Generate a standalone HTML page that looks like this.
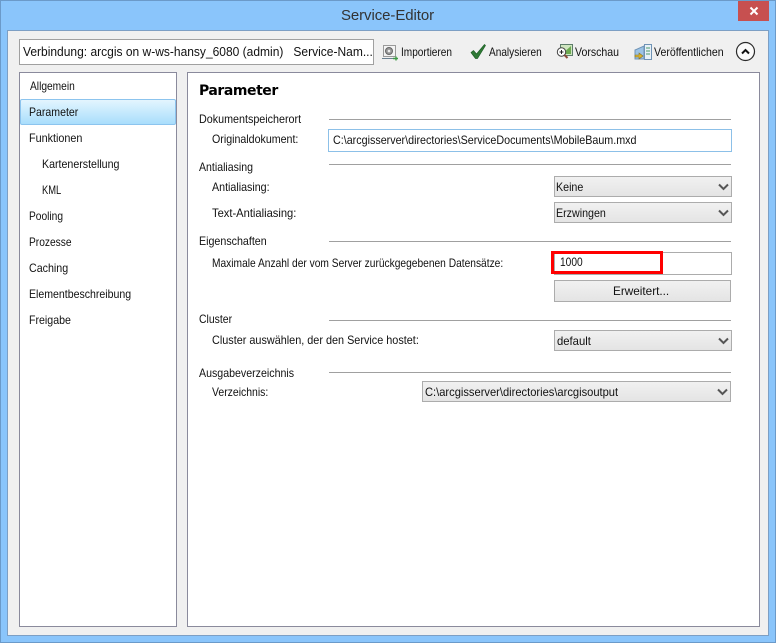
<!DOCTYPE html>
<html><head><meta charset="utf-8"><style>
html,body{margin:0;padding:0}
body{width:776px;height:643px;overflow:hidden;position:relative;background:#8ac5fb;font-family:"Liberation Sans",sans-serif;font-size:12px;color:#000}
div{position:absolute;box-sizing:border-box}
.t{white-space:nowrap;line-height:14px;height:14px;font-size:12px;color:#111;transform:scaleX(.89);transform-origin:0 0}
.line{height:1px;background:#a0a0a0;left:329px;width:402px}
.sel{height:21px;background:linear-gradient(#f1f1f1,#e4e4e4);border:1px solid #acacac}
.sel svg{position:absolute;right:2px;top:6px}
</style></head><body>
<div style="left:0;top:0;width:776px;height:643px;border:1px solid #6b9ac9"></div>
<div style="left:7px;top:30px;width:762px;height:606px;background:#f0f0f0;border:1px solid #7d9fc4"></div>
<div style="left:738px;top:1px;width:31px;height:20px;background:#c75050"></div>
<svg style="position:absolute;left:749px;top:6px" width="10" height="10"><path d="M1.5 1.5L8.5 8.5M8.5 1.5L1.5 8.5" stroke="#fff" stroke-width="2"/></svg>
<div style="left:0;top:7px;width:775px;text-align:center;font-size:15px;line-height:18px;color:#333;letter-spacing:-.08px">Service-Editor</div>

<div style="left:19px;top:39px;width:355px;height:26px;background:#fff;border:1px solid #a0a0a0"></div>
<div class="t" style="left:23px;top:45px;font-size:13px;transform:scaleX(.924)">Verbindung: arcgis on w-ws-hansy_6080 (admin) &nbsp; Service-Nam...</div>

<svg style="position:absolute;left:381px;top:44px" width="18" height="17">
<rect x="2.5" y="1.5" width="12" height="11" fill="#f4f4f4" stroke="#9a9a9a"/>
<circle cx="8" cy="7" r="3.5" fill="#999" stroke="#666"/><circle cx="8" cy="7" r="1.3" fill="#eee"/>
<path d="M1 14.5H12" stroke="#6a7f8f"/><path d="M12 14.5h5M15 12.5v4" stroke="#3f9a45" stroke-width="1.4"/></svg>
<div class="t" style="left:401px;top:45px;transform:scaleX(.84)">Importieren</div>
<svg style="position:absolute;left:470px;top:43px" width="17" height="17"><path d="M1 9.5L3.5 7.5L6.5 11L14.5 1.5L15.5 2.5L7.5 15.5L5.5 15.5Z" fill="#2f7a35" stroke="#1f5f28" stroke-width=".7" stroke-linejoin="round"/></svg>
<div class="t" style="left:489px;top:45px;transform:scaleX(.84)">Analysieren</div>
<svg style="position:absolute;left:556px;top:43px" width="18" height="18">
<rect x="4.5" y="1.5" width="12" height="11" fill="#cfe6c0" stroke="#5d7d6a"/><path d="M6 11L15 3V11Z" fill="#6caa50"/>
<circle cx="5.5" cy="9" r="4.2" fill="#fff" stroke="#444"/><path d="M3.5 9h4M5.5 7v4" stroke="#222"/><path d="M8.5 12l3 3" stroke="#8a4b3a" stroke-width="2"/></svg>
<div class="t" style="left:575px;top:45px;transform:scaleX(.88)">Vorschau</div>
<svg style="position:absolute;left:634px;top:44px" width="18" height="18">
<path d="M1 6L10 2V15H1Z" fill="#9cc3e6" stroke="#6f93b5"/><rect x="10.5" y="0.5" width="7" height="15" fill="#e8f1f8" stroke="#6f93b5"/>
<path d="M12 4h4M12 7h4M12 10h4" stroke="#4c9a6a"/><path d="M1 11h4V9l4 3-4 3v-2H1z" fill="#d7b332" stroke="#8a7420" stroke-width=".6"/></svg>
<div class="t" style="left:654px;top:45px;transform:scaleX(.88)">Veröffentlichen</div>
<svg style="position:absolute;left:735px;top:41px" width="21" height="21"><circle cx="10.5" cy="10.5" r="9" fill="#fbfbfb" stroke="#2a2a2a" stroke-width="1.2"/><path d="M7 12.5L10.5 9L14 12.5" fill="none" stroke="#111" stroke-width="2"/></svg>

<div style="left:19px;top:72px;width:158px;height:555px;background:#fff;border:1px solid #8a8a9c"></div>
<div style="left:187px;top:72px;width:573px;height:555px;background:#fff;border:1px solid #8a8a9c"></div>
<div style="left:20px;top:99px;width:156px;height:26px;background:linear-gradient(#e3f5fe,#a9defc);border:1px solid #8cc4ee;border-radius:2px"></div>

<div class="t" style="left:30px;top:79px;transform:scaleX(.85)">Allgemein</div>
<div class="t" style="left:29px;top:105px;transform:scaleX(.88)">Parameter</div>
<div class="t" style="left:29px;top:131px;transform:scaleX(.9)">Funktionen</div>
<div class="t" style="left:42px;top:157px;transform:scaleX(.886)">Kartenerstellung</div>
<div class="t" style="left:42px;top:183px;transform:scaleX(.78)">KML</div>
<div class="t" style="left:29px;top:209px;transform:scaleX(.85)">Pooling</div>
<div class="t" style="left:29px;top:235px;transform:scaleX(.85)">Prozesse</div>
<div class="t" style="left:29px;top:261px;transform:scaleX(.89)">Caching</div>
<div class="t" style="left:29px;top:287px;transform:scaleX(.88)">Elementbeschreibung</div>
<div class="t" style="left:29px;top:313px;transform:scaleX(.885)">Freigabe</div>

<div style="left:199px;top:83px;font-family:'DejaVu Sans',sans-serif;font-weight:bold;font-size:14px;line-height:17px;letter-spacing:-.45px;color:#000;white-space:nowrap">Parameter</div>

<div class="t" style="left:199px;top:112px;transform:scaleX(.895)">Dokumentspeicherort</div><div class="line" style="top:119px"></div>
<div class="t" style="left:212px;top:132px;transform:scaleX(.887)">Originaldokument:</div>
<div style="left:328px;top:129px;width:404px;height:23px;background:#fff;border:1px solid #8cc0e8"></div>
<div class="t" style="left:333px;top:133px;transform:scaleX(.894)">C:\arcgisserver\directories\ServiceDocuments\MobileBaum.mxd</div>

<div class="t" style="left:199px;top:160px;transform:scaleX(.88)">Antialiasing</div><div class="line" style="top:164px"></div>
<div class="t" style="left:212px;top:180px;transform:scaleX(.89)">Antialiasing:</div>
<div class="sel" style="left:554px;top:176px;width:178px"><svg width="11" height="8"><path d="M1 1.5L5.5 6L10 1.5" fill="none" stroke="#555" stroke-width="2"/></svg></div>
<div class="t" style="left:556px;top:180px">Keine</div>
<div class="t" style="left:212px;top:206px;transform:scaleX(.93)">Text-Antialiasing:</div>
<div class="sel" style="left:554px;top:202px;width:178px"><svg width="11" height="8"><path d="M1 1.5L5.5 6L10 1.5" fill="none" stroke="#555" stroke-width="2"/></svg></div>
<div class="t" style="left:556px;top:206px">Erzwingen</div>

<div class="t" style="left:199px;top:234px">Eigenschaften</div><div class="line" style="top:241px"></div>
<div class="t" style="left:212px;top:256px;transform:scaleX(.851)">Maximale Anzahl der vom Server zurückgegebenen Datensätze:</div>
<div style="left:554px;top:252px;width:178px;height:23px;background:#fff;border:1px solid #acacac"></div>
<div style="left:551px;top:251px;width:112px;height:23px;border:3px solid #f00"></div>
<div class="t" style="left:560px;top:255px;transform:scaleX(.85)">1000</div>
<div style="left:554px;top:280px;width:177px;height:22px;background:linear-gradient(#f1f1f1,#e4e4e4);border:1px solid #acacac"></div>
<div class="t" style="left:613px;top:284px;transform:scaleX(.98)">Erweitert...</div>

<div class="t" style="left:199px;top:312px;transform:scaleX(.87)">Cluster</div><div class="line" style="top:320px"></div>
<div class="t" style="left:212px;top:333px;transform:scaleX(.904)">Cluster auswählen, der den Service hostet:</div>
<div class="sel" style="left:554px;top:330px;width:178px"><svg width="11" height="8"><path d="M1 1.5L5.5 6L10 1.5" fill="none" stroke="#555" stroke-width="2"/></svg></div>
<div class="t" style="left:557px;top:334px;transform:scaleX(.94)">default</div>

<div class="t" style="left:199px;top:366px;transform:scaleX(.885)">Ausgabeverzeichnis</div><div class="line" style="top:372px"></div>
<div class="t" style="left:212px;top:385px;transform:scaleX(.87)">Verzeichnis:</div>
<div class="sel" style="left:422px;top:381px;width:309px"><svg width="11" height="8"><path d="M1 1.5L5.5 6L10 1.5" fill="none" stroke="#555" stroke-width="2"/></svg></div>
<div class="t" style="left:425px;top:385px;transform:scaleX(.928)">C:\arcgisserver\directories\arcgisoutput</div>
</body></html>
